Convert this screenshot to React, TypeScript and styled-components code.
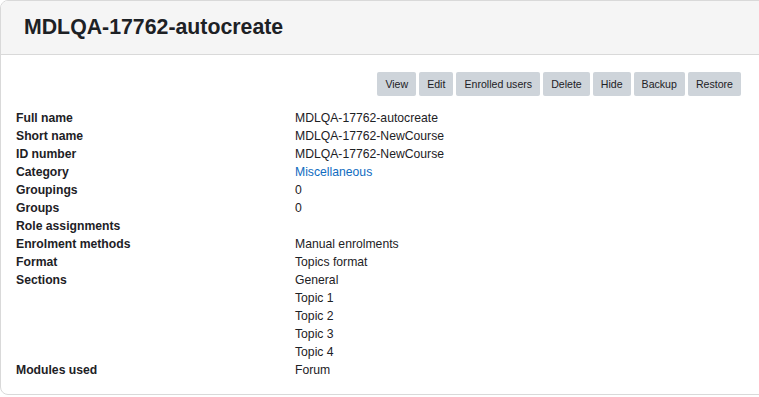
import React from 'react';
import styled, { createGlobalStyle } from 'styled-components';

const GlobalStyle = createGlobalStyle`
  html, body {
    margin: 0;
    padding: 0;
    background: #ffffff;
    overflow: hidden;
  }
  body {
    font-family: "Liberation Sans", Arial, sans-serif;
    color: #1d2125;
  }
`

const Card = styled.div`
  width: 780px;
  height: 395px;
  box-sizing: border-box;
  border: 1px solid #d9d9d9;
  border-radius: 8px;
  overflow: hidden;
  background: #fff;
`

const Header = styled.div`
  height: 54px;
  box-sizing: border-box;
  background: #f5f5f5;
  border-bottom: 1px solid #d9d9d9;
  display: flex;
  align-items: center;
  padding-left: 23px;
`

const Title = styled.h2`
  margin: 0;
  font-size: 21.3px;
  font-weight: 700;
  color: #1d2125;
`

const Body = styled.div`
  width: 758px;
  box-sizing: border-box;
  padding: 17px 18px 0 15px;
`

const Toolbar = styled.div`
  display: flex;
  justify-content: flex-end;
  gap: 3px;
  margin-bottom: 13px;
`

const Button = styled.button`
  height: 24px;
  padding: 0 8px;
  border: none;
  border-radius: 2px;
  background: #ced4da;
  color: #1d2125;
  font-family: "Liberation Sans", Arial, sans-serif;
  font-size: 10.6px;
  cursor: pointer;
`

const Details = styled.dl`
  margin: 0;
  display: grid;
  grid-template-columns: 279px 1fr;
  font-size: 12.2px;
  line-height: 18px;
`

const Label = styled.dt`
  font-weight: 700;
  grid-column: 1;
`

const Value = styled.dd`
  margin: 0;
  grid-column: 2;
`

const LinkValue = styled.a`
  color: #0f6cbf;
  text-decoration: none;
`

const actions = ['View', 'Edit', 'Enrolled users', 'Delete', 'Hide', 'Backup', 'Restore']

type Row = { label: string; values: string[]; link?: boolean }

const rows: Row[] = [
  { label: 'Full name', values: ['MDLQA-17762-autocreate'] },
  { label: 'Short name', values: ['MDLQA-17762-NewCourse'] },
  { label: 'ID number', values: ['MDLQA-17762-NewCourse'] },
  { label: 'Category', values: ['Miscellaneous'], link: true },
  { label: 'Groupings', values: ['0'] },
  { label: 'Groups', values: ['0'] },
  { label: 'Role assignments', values: [''] },
  { label: 'Enrolment methods', values: ['Manual enrolments'] },
  { label: 'Format', values: ['Topics format'] },
  { label: 'Sections', values: ['General', 'Topic 1', 'Topic 2', 'Topic 3', 'Topic 4'] },
  { label: 'Modules used', values: ['Forum'] },
]

const App: React.FC = () => {
  return (
    <>
      <GlobalStyle />
      <Card>
        <Header>
          <Title>MDLQA-17762-autocreate</Title>
        </Header>
        <Body>
          <Toolbar>
            {actions.map((a) => (
              <Button key={a}>{a}</Button>
            ))}
          </Toolbar>
          <Details>
            {rows.map((row) => (
              <React.Fragment key={row.label}>
                <Label>{row.label}</Label>
                <Value>
                  {row.values.map((v, i) => (
                    <div key={i}>
                      {row.link ? <LinkValue href="#">{v}</LinkValue> : v || '\u00a0'}
                    </div>
                  ))}
                </Value>
              </React.Fragment>
            ))}
          </Details>
        </Body>
      </Card>
    </>
  )
}

export default App
